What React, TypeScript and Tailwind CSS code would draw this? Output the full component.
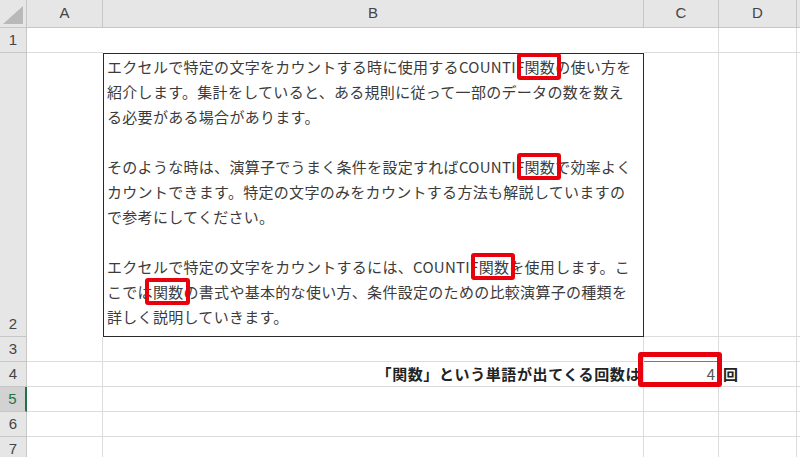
import React from "react";

const jp = "font-['Noto_Sans_CJK_JP',sans-serif]";

// red highlight frame drawn over a word
function Mark({ children }: { children: React.ReactNode }) {
  return (
    <span className="relative inline-block h-[25px] align-top">
      {children}
      <span className="absolute -left-[8px] -right-[6px] -top-[1px] -bottom-[1px] rounded-[3px] border-4 border-[#e8000d]" />
    </span>
  );
}

function Line({ children }: { children?: React.ReactNode }) {
  return <div className="h-[25px] whitespace-nowrap leading-[25px]">{children}</div>;
}

const cell = "border-r border-b border-[#dcdcdc]";
const colHead =
  "flex items-center justify-center border-r border-b border-[#c6c6c6] bg-[#e6e6e6] text-[15px] text-[#444] font-['Liberation_Sans',sans-serif]";
const rowHead =
  "flex items-end justify-center pb-[1px] border-r border-b border-[#c6c6c6] bg-[#e6e6e6] text-[15px] text-[#444] font-['Liberation_Sans',sans-serif]";

export default function App() {
  const rows = [5, 6, 7];

  return (
    <div className="h-[457px] w-[800px] overflow-hidden bg-white">
      <div className="grid grid-cols-[27px_76px_541px_75px_78px_1fr] grid-rows-[28px_25px_284px_25px_25px_25px_25px_25px]">
        {/* header row */}
        <div className="relative border-r border-b border-[#c6c6c6] bg-[#e6e6e6]">
          <svg className="absolute right-[3px] bottom-[3px]" width="20" height="18" viewBox="0 0 20 18">
            <polygon points="20,0 20,18 0,18" fill="#b9b9b9" />
          </svg>
        </div>
        <div className={colHead}>A</div>
        <div className={colHead}>B</div>
        <div className={colHead}>C</div>
        <div className={colHead}>D</div>
        <div className="border-b border-[#c6c6c6] bg-[#e6e6e6]" />

        {/* row 1 */}
        <div className={rowHead}>1</div>
        <div className="border-b border-[#dcdcdc]" />
        <div />
        <div className={cell} />
        <div className={cell} />
        <div className="border-b border-[#dcdcdc]" />

        {/* row 2 */}
        <div className={rowHead}>2</div>
        <div />
        <div className={`border border-[#2a2a2a] pl-[3px] text-[15px] tracking-[0.3px] text-[#3b3b3b] ${jp}`}>
          <Line>
            エクセルで特定の文字をカウントする時に使用するCOUNTIF
            <Mark>関数</Mark>の使い方を
          </Line>
          <Line>紹介します。集計をしていると、ある規則に従って一部のデータの数を数え</Line>
          <Line>る必要がある場合があります。</Line>
          <Line />
          <Line>
            そのような時は、演算子でうまく条件を設定すればCOUNTIF
            <Mark>関数</Mark>で効率よく
          </Line>
          <Line>カウントできます。特定の文字のみをカウントする方法も解説していますの</Line>
          <Line>で参考にしてください。</Line>
          <Line />
          <Line>
            エクセルで特定の文字をカウントするには、COUNTIF
            <Mark>関数</Mark>を使用します。こ
          </Line>
          <Line>
            こでは<Mark>関数</Mark>の書式や基本的な使い方、条件設定のための比較演算子の種類を
          </Line>
          <Line>詳しく説明していきます。</Line>
        </div>
        <div className={cell} />
        <div className={cell} />
        <div className="border-b border-[#dcdcdc]" />

        {/* row 3 */}
        <div className={rowHead}>3</div>
        <div className={cell} />
        <div className={cell} />
        <div className="border-r border-b border-r-[#dcdcdc] border-b-[#7a7a7a]" />
        <div className={cell} />
        <div className="border-b border-[#dcdcdc]" />

        {/* row 4 */}
        <div className={rowHead}>4</div>
        <div className={cell} />
        <div className={`${cell} flex items-center justify-end pr-[2px] text-[15px] font-bold tracking-[0.6px] text-[#222] ${jp}`}>
          「関数」という単語が出てくる回数は
        </div>
        <div className={`${cell} relative flex items-center justify-end pr-[3px] text-[15px] text-[#555] ${jp}`}>
          4
          <span className="absolute -left-[6px] -right-[4px] -top-[10px] -bottom-[1px] z-10 rounded-[3px] border-[5px] border-[#e8000d]" />
        </div>
        <div className={`${cell} flex items-center pl-[4px] text-[15px] font-bold text-[#222] ${jp}`}>回</div>
        <div className="border-b border-[#dcdcdc]" />

        {/* rows 5-7 */}
        {rows.map((r) => (
          <React.Fragment key={r}>
            {r === 5 ? (
              <div className="flex items-end justify-center border-b border-r-2 border-b-[#c6c6c6] border-r-[#217346] bg-[#d2d2d2] pb-[1px] font-['Liberation_Sans',sans-serif] text-[15px] text-[#217346]">
                5
              </div>
            ) : (
              <div className={rowHead}>{r}</div>
            )}
            <div className={cell} />
            <div className={cell} />
            <div className={cell} />
            <div className={cell} />
            <div className="border-b border-[#dcdcdc]" />
          </React.Fragment>
        ))}
      </div>
    </div>
  );
}
